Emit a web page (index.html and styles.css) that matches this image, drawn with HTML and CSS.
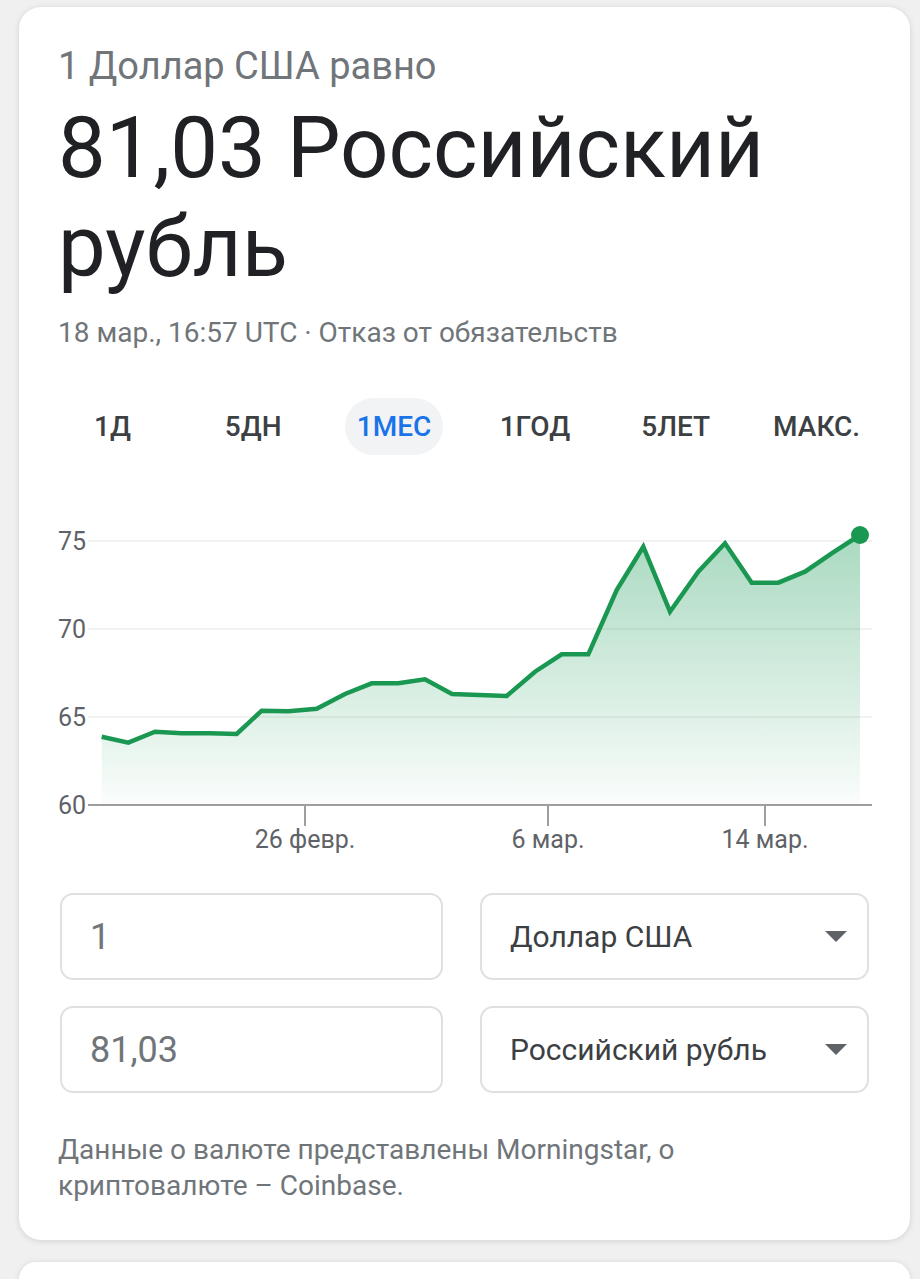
FILE: index.html
```html
<!DOCTYPE html>
<html lang="ru">
<head>
<meta charset="utf-8">
<link rel="stylesheet" href="styles.css">
</head>
<body>
<div class="card">
  <div class="eyebrow">1 Доллар США равно</div>
  <div class="result">81,03 Российский рубль</div>
  <div class="meta">18 мар., 16:57 UTC · Отказ от обязательств</div>
  <div class="tabs">
    <span class="tab">1Д</span>
    <span class="tab">5ДН</span>
    <span class="tab active">1МЕС</span>
    <span class="tab">1ГОД</span>
    <span class="tab">5ЛЕТ</span>
    <span class="tab">МАКС.</span>
  </div>
  <svg class="chart" width="814" height="350" viewBox="0 0 814 350">
    <defs>
      <linearGradient id="fillGrad" x1="0" y1="0" x2="0" y2="1">
        <stop offset="0" stop-color="#1e9c5a" stop-opacity="0.38"/>
        <stop offset="1" stop-color="#1e9c5a" stop-opacity="0.02"/>
      </linearGradient>
    </defs>
    <g class="grid">
      <line x1="30" y1="31" x2="814" y2="31"/>
      <line x1="30" y1="119" x2="814" y2="119"/>
      <line x1="30" y1="207" x2="814" y2="207"/>
    </g>
    <path class="area" d="M43.7,226.7 L70.3,232.7 L97,221.7 L123.7,223.3 L152,223.3 L178.7,224 L203.7,200.7 L230.3,201.3 L258.7,198.7 L287,184 L313.7,173.3 L340.3,173.3 L367,169.3 L394,184 L421,185 L448.7,186 L477,161.7 L503.7,144.3 L530.3,144.3 L558.7,80 L585.3,36.7 L612,101.7 L640.3,61.7 L667,33.3 L693.7,72.7 L720.3,72.7 L747,61.7 L773.7,43.3 L802,25 L802,295 L43.7,295 Z" fill="url(#fillGrad)"/>
    <polyline class="line" points="43.7,226.7 70.3,232.7 97,221.7 123.7,223.3 152,223.3 178.7,224 203.7,200.7 230.3,201.3 258.7,198.7 287,184 313.7,173.3 340.3,173.3 367,169.3 394,184 421,185 448.7,186 477,161.7 503.7,144.3 530.3,144.3 558.7,80 585.3,36.7 612,101.7 640.3,61.7 667,33.3 693.7,72.7 720.3,72.7 747,61.7 773.7,43.3 802,25"/>
    <circle class="dot" cx="802" cy="25" r="9"/>
    <g class="axis">
      <line x1="30" y1="295" x2="814" y2="295"/>
      <line x1="247" y1="295" x2="247" y2="316"/>
      <line x1="490" y1="295" x2="490" y2="316"/>
      <line x1="707" y1="295" x2="707" y2="316"/>
    </g>
    <g class="ylabels">
      <text x="0" y="40">75</text>
      <text x="0" y="128">70</text>
      <text x="0" y="216">65</text>
      <text x="0" y="304">60</text>
    </g>
    <g class="xlabels">
      <text x="247" y="338">26 февр.</text>
      <text x="490" y="338">6 мар.</text>
      <text x="707" y="338">14 мар.</text>
    </g>
  </svg>
  <div class="converter">
    <div class="field amount">1</div>
    <div class="field select"><span>Доллар США</span><span class="caret"></span></div>
    <div class="field amount">81,03</div>
    <div class="field select"><span>Российский рубль</span><span class="caret"></span></div>
  </div>
  <p class="note">Данные о валюте представлены Morningstar, о криптовалюте – Coinbase.</p>
</div>
<div class="card next"></div>
</body>
</html>
```

FILE: styles.css
```css
html, body {
  margin: 0;
  padding: 0;
  background: #f0f0f0;
}
body {
  padding: 7px 10px 0 19px;
  font-family: Roboto, "Noto Sans", sans-serif;
  overflow: hidden;
  height: 1279px;
  box-sizing: border-box;
}
.card {
  background: #fff;
  border-radius: 22px;
  box-shadow: 0 1px 6px rgba(0,0,0,0.13);
  padding: 37px 39px 0 39px;
  height: 1233px;
  box-sizing: border-box;
}
.card.next {
  margin-top: 22px;
  height: 17px;
  padding: 0;
  border-radius: 22px 22px 0 0;
}
.eyebrow {
  font-size: 38px;
  line-height: 44px;
  color: #70757a;
}
.result {
  font-size: 85px;
  line-height: 99px;
  color: #202124;
  margin-top: 11px;
  width: 770px;
}
.meta {
  font-size: 28px;
  line-height: 36px;
  color: #70757a;
  margin-top: 18px;
}
.tabs {
  display: grid;
  grid-template-columns: repeat(6, 1fr);
  justify-items: center;
  margin: 47px -16px 0 -16px;
}
.tab {
  font-size: 28px;
  font-weight: 500;
  color: #3c4043;
  line-height: 57px;
  padding: 0 12px;
  border-radius: 29px;
}
.tab.active {
  color: #1a73e8;
  background: #f1f3f4;
}
.chart {
  display: block;
  margin-top: 55px;
  font-family: Roboto, "Noto Sans", sans-serif;
}
.grid line {
  stroke: #f1f1f1;
  stroke-width: 2;
}
.axis line {
  stroke: #9e9e9e;
  stroke-width: 2;
}
.line {
  fill: none;
  stroke: #1a9852;
  stroke-width: 4.5;
  stroke-linejoin: miter;
}
.dot {
  fill: #1a9852;
}
.ylabels text {
  font-size: 25px;
  fill: #5f6368;
}
.xlabels text {
  font-size: 25px;
  fill: #5f6368;
  text-anchor: middle;
}
.converter {
  display: grid;
  grid-template-columns: 383px 389px;
  column-gap: 37px;
  row-gap: 26px;
  margin: 33px 0 0 2px;
}
.field {
  height: 87px;
  box-sizing: border-box;
  border: 2px solid #e0e0e0;
  border-radius: 13px;
  display: flex;
  align-items: center;
  padding: 0 20px 0 28px;
}
.field.amount {
  font-size: 36px;
  color: #70757a;
}
.field.select {
  font-size: 30px;
  color: #3c4043;
  justify-content: space-between;
}
.caret {
  width: 0;
  height: 0;
  border-left: 11px solid transparent;
  border-right: 11px solid transparent;
  border-top: 11px solid #5f6368;
}
.note {
  font-size: 28px;
  line-height: 36px;
  color: #70757a;
  margin: 39px 0 0 0;
  width: 720px;
}
```
